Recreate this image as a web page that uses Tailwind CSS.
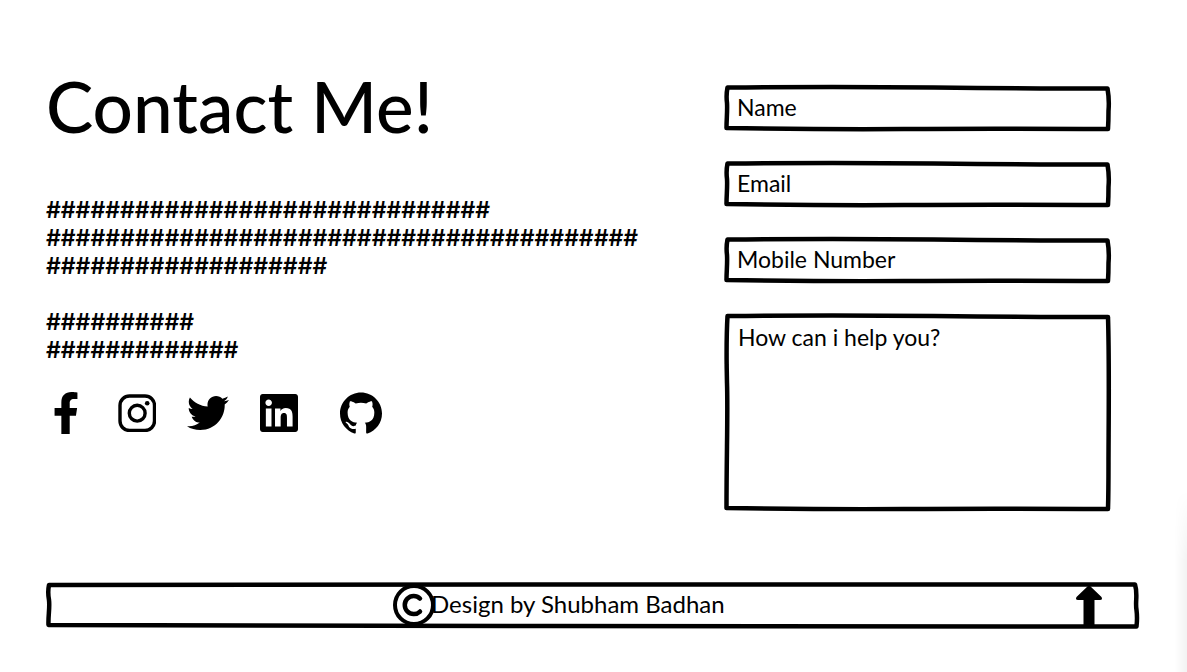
<!DOCTYPE html>
<html lang="en">
<head>
<meta charset="utf-8">
<meta name="viewport" content="width=device-width, initial-scale=1">
<title>Contact Me!</title>
<script src="https://cdn.jsdelivr.net/npm/@tailwindcss/browser@4"></script>
</head>
<body class="relative min-h-screen overflow-x-hidden bg-white font-['Lato','Liberation_Sans',sans-serif] text-[23px] leading-7 text-black">

<!-- Hand-drawn frames, stretched to the box that uses them -->
<svg class="hidden" aria-hidden="true">
  <symbol id="frame-field" viewBox="0 0 386 46" preserveAspectRatio="none" overflow="visible">
    <path fill="none" stroke="currentColor" stroke-width="4.500" stroke-linejoin="round" vector-effect="non-scaling-stroke" d="M3.500 2.500 Q110 1.500 210 2.500 T383.500 3.500 C385 12 385 20 384.500 26 Q384.500 36 384 44 Q260 43.500 180 44 T2.500 43 C2.500 34 3.500 26 3 18 Q2 10 3.500 2.500Z"/>
  </symbol>
  <symbol id="frame-area" viewBox="0 0 386 198" preserveAspectRatio="none" overflow="visible">
    <path fill="none" stroke="currentColor" stroke-width="4.500" stroke-linejoin="round" vector-effect="non-scaling-stroke" d="M3.500 3 Q110 2 210 3 T384 4 C385.500 50 384.500 120 384.500 150 Q384.500 180 384 196 Q260 195.500 180 196 T2.500 195 C2.500 140 4 100 3 70 Q2 30 3.500 3Z"/>
  </symbol>
  <symbol id="frame-footer" viewBox="0 0 1093 46" preserveAspectRatio="none" overflow="visible">
    <path fill="none" stroke="currentColor" stroke-width="4.500" stroke-linejoin="round" vector-effect="non-scaling-stroke" d="M3 3 Q300 2 600 2.500 T1089 2.500 C1092 12 1089 20 1090.500 28 Q1091.500 36 1090.500 44.500 Q800 43.500 500 44 T2.500 43 C2 34 4 26 3 18 Q1.500 10 3 3Z"/>
  </symbol>
</svg>

<div class="flex flex-col pl-[46px] pr-12 pt-[70px]">
  <main class="flex items-start justify-between pr-[29px]">
    <section>
      <h1 class="text-[71px] leading-[72px] font-medium">Contact Me!</h1>
      <div class="mt-[54px] font-['Inter'] text-[23px] font-semibold">
        <p>##############################<br>########################################<br>###################</p>
        <p class="mt-7">##########<br>#############</p>
      </div>
      <nav class="mt-[27px] flex h-[44px] items-center" aria-label="Social links">
        <a href="#facebook" aria-label="Facebook" class="ml-2"><svg class="h-[42px] w-6" viewBox="16 0 288 512" preserveAspectRatio="none" fill="currentColor"><path d="M279.14 288l14.22-92.66h-88.91v-60.13c0-25.35 12.42-50.06 52.24-50.06h40.42V6.26S260.43 0 225.36 0c-73.22 0-121.08 44.38-121.08 124.72v70.62H22.89V288h81.39v224h100.17V288z"/></svg></a>
        <a href="#instagram" aria-label="Instagram" class="ml-10"><svg class="size-[38px]" viewBox="0 0 38 38" fill="none" stroke="currentColor" stroke-width="3.400"><rect x="2" y="2" width="34.500" height="34.500" rx="9.500"/><circle cx="19.200" cy="19.200" r="7.900"/><circle cx="29.200" cy="9.200" r="2.300" fill="currentColor" stroke="none"/></svg></a>
        <a href="#twitter" aria-label="Twitter" class="ml-[31px]"><svg class="size-[42px]" viewBox="0 0 512 512" fill="currentColor"><path d="M459.37 151.716c.325 4.548.325 9.097.325 13.645 0 138.72-105.583 298.558-298.558 298.558-59.452 0-114.68-17.219-161.137-47.106 8.447.974 16.568 1.299 25.34 1.299 49.055 0 94.213-16.568 130.274-44.832-46.132-.975-84.792-31.188-98.112-72.772 6.498.974 12.995 1.624 19.818 1.624 9.421 0 18.843-1.3 27.614-3.573-48.081-9.747-84.143-51.98-84.143-102.985v-1.299c13.969 7.797 30.214 12.67 47.431 13.319-28.264-18.843-46.781-51.005-46.781-87.391 0-19.492 5.197-37.36 14.294-52.954 51.655 63.675 129.3 105.258 216.365 109.807-1.624-7.797-2.599-15.918-2.599-24.04 0-57.828 46.782-104.934 104.934-104.934 30.213 0 57.502 12.67 76.67 33.137 23.715-4.548 46.456-13.32 66.599-25.34-7.798 24.366-24.366 44.833-46.132 57.827 21.117-2.273 41.584-8.122 60.426-16.243-14.292 20.791-32.161 39.308-52.628 54.253z"/></svg></a>
        <a href="#linkedin" aria-label="LinkedIn" class="ml-[31px]"><svg class="size-[38px]" viewBox="0 32 448 448" fill="currentColor"><path d="M416 32H31.900C14.300 32 0 46.500 0 64.300v383.400C0 465.500 14.300 480 31.900 480H416c17.600 0 32-14.500 32-32.300V64.300c0-17.800-14.400-32.300-32-32.300zM135.400 416H69V202.200h66.500V416zm-33.200-243c-21.300 0-38.500-17.300-38.500-38.500S80.900 96 102.200 96c21.200 0 38.500 17.300 38.500 38.500 0 21.300-17.200 38.500-38.500 38.500zm282.100 243h-66.400V312c0-24.800-.5-56.700-34.500-56.700-34.600 0-39.900 27-39.900 54.900V416h-66.400V202.200h63.700v29.200h.9c8.900-16.800 30.600-34.500 62.900-34.500 67.200 0 79.700 44.300 79.700 101.900V416z"/></svg></a>
        <a href="#github" aria-label="GitHub" class="ml-[42px]"><svg class="size-[42px]" viewBox="0 0 24 24" fill="currentColor"><path d="M12 .297c-6.63 0-12 5.373-12 12 0 5.303 3.438 9.800 8.205 11.385.6.113.82-.258.82-.577 0-.285-.01-1.040-.015-2.040-3.338.724-4.042-1.610-4.042-1.610C4.422 18.070 3.633 17.700 3.633 17.700c-1.087-.744.084-.729.084-.729 1.205.084 1.838 1.236 1.838 1.236 1.070 1.835 2.809 1.305 3.495.998.108-.776.417-1.305.76-1.605-2.665-.3-5.466-1.332-5.466-5.930 0-1.310.465-2.380 1.235-3.220-.135-.303-.54-1.523.105-3.176 0 0 1.005-.322 3.300 1.230.96-.267 1.980-.399 3-.405 1.020.006 2.040.138 3 .405 2.280-1.552 3.285-1.230 3.285-1.230.645 1.653.24 2.873.12 3.176.765.840 1.230 1.910 1.230 3.220 0 4.610-2.805 5.625-5.475 5.920.42.360.81 1.096.81 2.220 0 1.606-.015 2.896-.015 3.286 0 .315.210.690.825.570C20.565 22.092 24 17.592 24 12.297c0-6.627-5.373-12-12-12"/></svg></a>
      </nav>
    </section>

    <form class="mt-[15px] flex w-[386px] flex-col gap-[30px]">
      <div class="relative h-[46px]">
        <svg class="absolute inset-0 size-full overflow-visible" aria-hidden="true"><use href="#frame-field"/></svg>
        <input type="text" name="name" aria-label="Name" placeholder="Name" class="relative block size-full bg-transparent px-[13px] pb-[3px] outline-none placeholder:text-black">
      </div>
      <div class="relative h-[46px]">
        <svg class="absolute inset-0 size-full overflow-visible" aria-hidden="true"><use href="#frame-field"/></svg>
        <input type="email" name="email" aria-label="Email" placeholder="Email" class="relative block size-full bg-transparent px-[13px] pb-[3px] outline-none placeholder:text-black">
      </div>
      <div class="relative h-[46px]">
        <svg class="absolute inset-0 size-full overflow-visible" aria-hidden="true"><use href="#frame-field"/></svg>
        <input type="tel" name="mobile" aria-label="Mobile Number" placeholder="Mobile Number" class="relative block size-full bg-transparent px-[13px] pb-[3px] outline-none placeholder:text-black">
      </div>
      <div class="relative h-[198px]">
        <svg class="absolute inset-0 size-full overflow-visible" aria-hidden="true"><use href="#frame-area"/></svg>
        <textarea name="message" aria-label="How can i help you?" placeholder="How can i help you?" class="relative block size-full resize-none bg-transparent px-[14px] py-[10px] outline-none placeholder:text-black"></textarea>
      </div>
    </form>
  </main>

  <footer class="relative mt-[71px] flex h-[46px] items-center pl-[347px] pr-9 text-[24px]">
    <svg class="absolute inset-0 size-full overflow-visible" aria-hidden="true"><use href="#frame-footer"/></svg>
    <svg class="size-[42px] shrink-0" viewBox="0 0 42 42" fill="none" stroke="currentColor" role="img" aria-label="Copyright"><circle cx="21" cy="21" r="19" stroke-width="4"/><path stroke-width="4.500" stroke-linecap="round" d="M27 14.500A9 9 0 1 0 27 27.500"/></svg>
    <p class="-ml-1 pb-[3px]">Design by Shubham Badhan</p>
    <button type="button" aria-label="Back to top" class="ml-auto"><svg class="h-[42px] w-7" viewBox="0 0 28 42" fill="currentColor"><path d="M14 1L26.500 13Q28 16 25 16H19.500V42H8.500V16H3Q0 16 1.500 13Z"/></svg></button>
  </footer>
</div>

<div class="absolute right-0 top-[490px] bottom-0 w-3 bg-linear-to-r from-transparent to-black/5 mask-t-from-60%"></div>
</body>
</html>
